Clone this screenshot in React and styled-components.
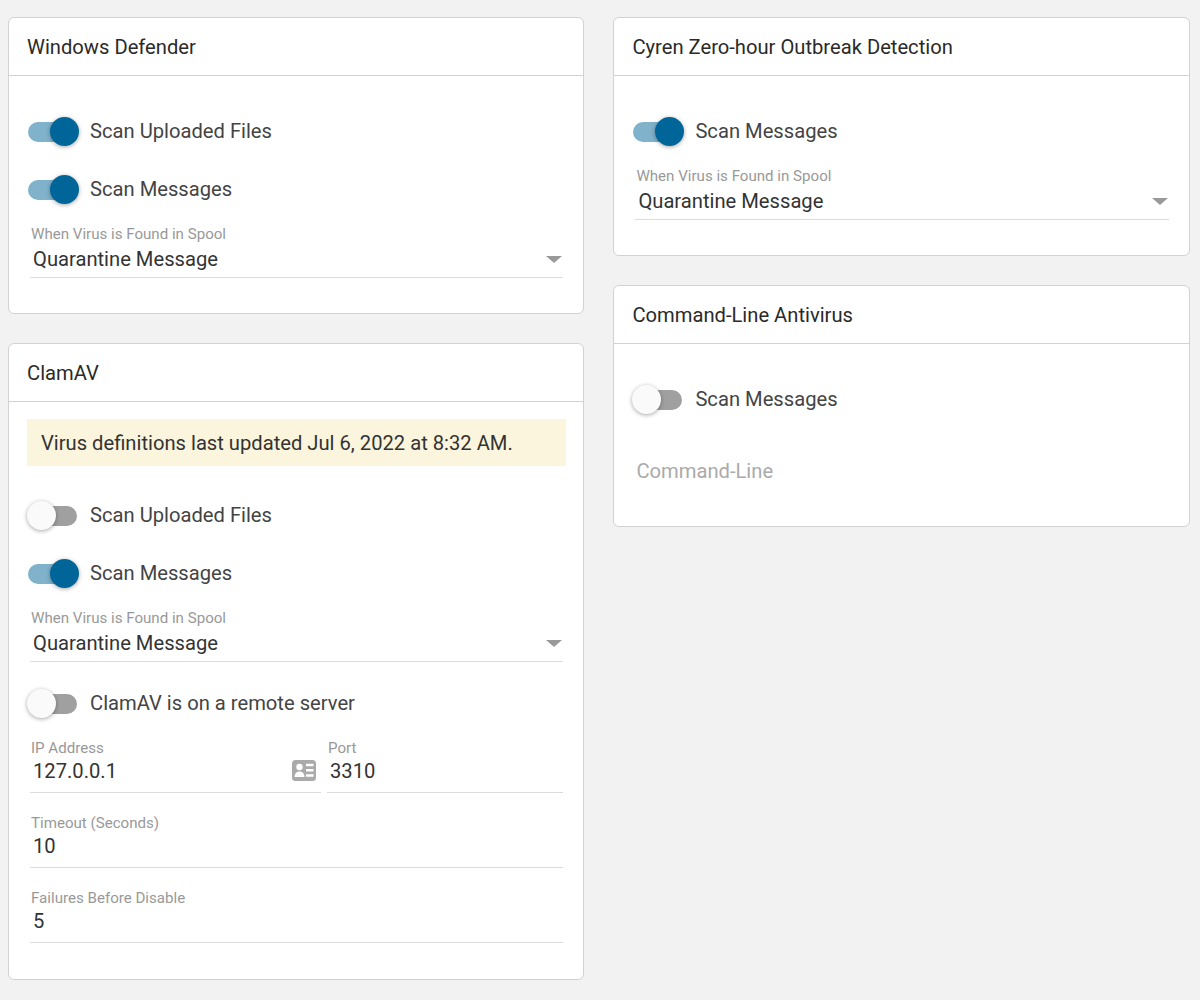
import React from "react";
import styled, { createGlobalStyle } from "styled-components";

const Global = createGlobalStyle`
  html, body { margin: 0; padding: 0; background: #f2f2f2; }
  body { font-family: Roboto, "Liberation Sans", sans-serif; }
`;

const Page = styled.div`
  display: grid;
  grid-template-columns: 576.4px 576.4px;
  column-gap: 29px;
  align-items: start;
  padding: 17px 0 20px 8px;
`;
const Column = styled.div`
  display: flex;
  flex-direction: column;
  gap: 29px;
`;
const Card = styled.section`
  background: #fff;
  border: 1px solid #d2d2d2;
  border-radius: 6px;
`;
const CardHeader = styled.header`
  height: 57px;
  display: flex;
  align-items: center;
  padding: 0 18px;
  border-bottom: 1px solid #d2d2d2;
  font-size: 20.18px;
  color: #2a2a2a;
`;
const CardBody = styled.div`
  padding: 17px 20px 22px 18px;
`;
const Banner = styled.div`
  background: #fbf5dd;
  height: 47px;
  margin: 0 -3px 11px 0;
  padding: 0 14px;
  display: flex;
  align-items: center;
  font-size: 20.18px;
  color: #333;
`;
const SwitchGroup = styled.div`
  padding-top: 10px;
`;
const SwitchRow = styled.div`
  height: 58px;
  display: flex;
  align-items: center;
`;
const Track = styled.span`
  position: relative;
  flex: none;
  width: 49px;
  height: 20px;
  margin: -1px 0 0 1px;
  border-radius: 10px;
  background: ${(p) => (p.$on ? "#80b2cc" : "#a0a0a0")};
`;
const Thumb = styled.span`
  position: absolute;
  top: -5px;
  left: ${(p) => (p.$on ? "22px" : "-1px")};
  width: 29px;
  height: 29px;
  border-radius: 50%;
  background: ${(p) => (p.$on ? "#006699" : "#fafafa")};
  box-shadow: 0 1px 4px rgba(0, 0, 0, 0.35);
`;
const SwitchLabel = styled.span`
  margin: -3px 0 0 13px;
  font-size: 20.18px;
  line-height: 24px;
  color: #444;
`;
const FieldRow = styled.div`
  display: flex;
  gap: 6px;
  margin: 1px 0 16px;
`;
const Field = styled.div`
  position: relative;
  flex: ${(p) => p.$flex || "1 1 0"};
  height: 59px;
  margin: 0 0 ${(p) => p.$mb ?? 16}px 3px;
  border-bottom: 1px solid #dcdcdc;
  box-sizing: border-box;
  ${FieldRow} & { margin-bottom: 0; }
  ${FieldRow} &:last-child { margin-left: 0; }
`;
const FieldLabel = styled.label`
  display: block;
  padding: ${(p) => (p.$select ? 6 : 5)}px 0 0 1px;
  font-size: 15.1px;
  line-height: 18px;
  color: #999;
`;
const FieldValue = styled.div`
  padding-left: 3px;
  margin-top: ${(p) => (p.$select ? 4 : 2)}px;
  font-size: 20.18px;
  line-height: 24px;
  color: #333;
`;
const Arrow = styled.span`
  position: absolute;
  right: 1px;
  bottom: 14px;
  width: 0;
  height: 0;
  border-left: 8px solid transparent;
  border-right: 8px solid transparent;
  border-top: 7px solid #999;
`;
const IconSvg = styled.svg`
  position: absolute;
  right: 5px;
  bottom: 11px;
  width: 24px;
  height: 21px;
`;
const Placeholder = styled.div`
  height: 62px;
  margin: 13px 0 0 3px;
  padding-left: 1px;
  font-size: 20.18px;
  line-height: 58px;
  color: #aaa;
`;

const AddressCard = () => (
  <IconSvg viewBox="0 0 24 21">
    <rect x="0" y="0" width="24" height="21" rx="3.5" fill="#aaa" />
    <circle cx="7.500" cy="7" r="3.200" fill="#fff" />
    <path d="M2.500 17c0-3.400 2.200-5.500 5-5.500s5 2.100 5 5.500z" fill="#fff" />
    <path d="M14 3.800h7.500v2.500H14zM14 9h7.500v2.500H14zM14 14.200h7.500v2.500H14z" fill="#fff" />
  </IconSvg>
);

const Toggle = ({ on, children }) => (
  <SwitchRow>
    <Track $on={on}>
      <Thumb $on={on} />
    </Track>
    <SwitchLabel>{children}</SwitchLabel>
  </SwitchRow>
);

const SelectField = () => (
  <Field $mb={13}>
    <FieldLabel $select>When Virus is Found in Spool</FieldLabel>
    <FieldValue $select>Quarantine Message</FieldValue>
    <Arrow />
  </Field>
);

const TextField = ({ label, value, mb, flex, icon }) => (
  <Field $mb={mb} $flex={flex}>
    <FieldLabel>{label}</FieldLabel>
    <FieldValue>{value}</FieldValue>
    {icon && <AddressCard />}
  </Field>
);

export default function App() {
  return (
    <Page>
      <Global />
      <Column>
        <Card>
          <CardHeader>Windows Defender</CardHeader>
          <CardBody>
            <SwitchGroup>
              <Toggle on>Scan Uploaded Files</Toggle>
              <Toggle on>Scan Messages</Toggle>
            </SwitchGroup>
            <SelectField />
          </CardBody>
        </Card>
        <Card>
          <CardHeader>ClamAV</CardHeader>
          <CardBody>
            <Banner>Virus definitions last updated Jul 6, 2022 at 8:32 AM.</Banner>
            <SwitchGroup>
              <Toggle>Scan Uploaded Files</Toggle>
              <Toggle on>Scan Messages</Toggle>
            </SwitchGroup>
            <SelectField />
            <Toggle>ClamAV is on a remote server</Toggle>
            <FieldRow>
              <TextField label="IP Address" value="127.0.0.1" flex="0 0 291px" icon />
              <TextField label="Port" value="3310" flex="1 1 0" />
            </FieldRow>
            <TextField label="Timeout (Seconds)" value="10" />
            <TextField label="Failures Before Disable" value="5" mb={14} />
          </CardBody>
        </Card>
      </Column>
      <Column>
        <Card>
          <CardHeader>Cyren Zero-hour Outbreak Detection</CardHeader>
          <CardBody>
            <SwitchGroup>
              <Toggle on>Scan Messages</Toggle>
            </SwitchGroup>
            <SelectField />
          </CardBody>
        </Card>
        <Card>
          <CardHeader>Command-Line Antivirus</CardHeader>
          <CardBody>
            <SwitchGroup>
              <Toggle>Scan Messages</Toggle>
            </SwitchGroup>
            <Placeholder>Command-Line</Placeholder>
          </CardBody>
        </Card>
      </Column>
    </Page>
  );
}
